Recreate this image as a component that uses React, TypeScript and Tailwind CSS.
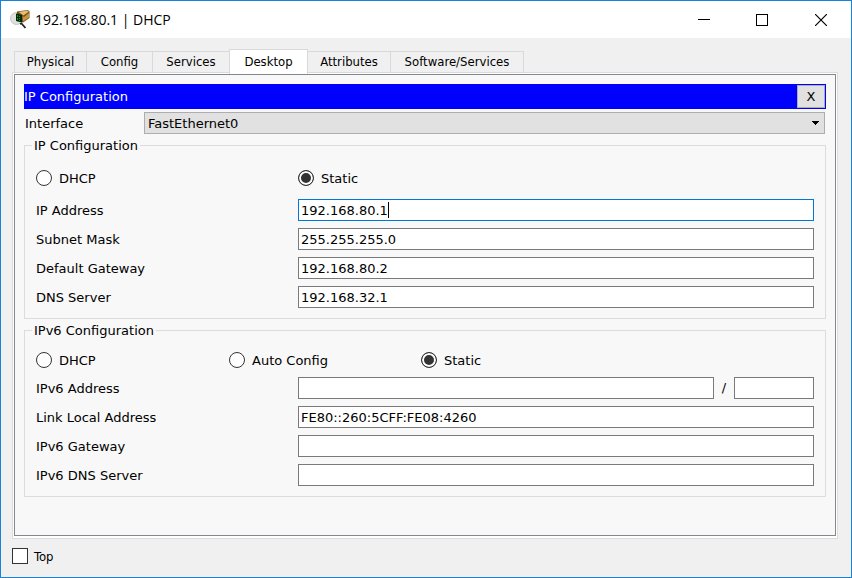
import { useState, type ReactNode } from "react";

const tabs = [
  { name: "Physical", width: "w-[73px]" },
  { name: "Config", width: "w-[67px]" },
  { name: "Services", width: "w-[78px]" },
  { name: "Desktop", width: "w-[79px]" },
  { name: "Attributes", width: "w-[84px]" },
  { name: "Software/Services", width: "w-[134px]" },
];

const fieldBox = "h-[22px] min-w-0 border bg-white px-[2px] leading-5 outline-none";

function DeviceIcon() {
  return (
    <svg width="20" height="20" viewBox="0 0 20 20" aria-hidden="true">
      <ellipse cx="6.500" cy="8.500" rx="6" ry="6" fill="#dfe1df" stroke="#c4c6c4" />
      <path d="M7 1.500 17.500 0 19.500 1v7L13 12.500 7 11z" fill="#6e4f1c" />
      <path d="M8.500 2 17 .5l2 1-5.500 4z" fill="#e6bc6c" />
      <path d="M12.500 6l1.500 1 5-4v4.500l-6 4z" fill="#c8963c" />
      <path d="M6 3.500 12 5v7.500L6 11z" fill="#06280a" />
      <path d="M7 5h1v2H7zM9 6h1v1H9zM7 8h1v2H7zM9 8h1v1H9zM9 10h1v1H9z" fill="#1f8a34" />
      <path d="M10 14l1.500-.5 4 4.500" fill="none" stroke="#222" strokeWidth="1.800" />
    </svg>
  );
}

function Radio({ name, label, checked, onSelect }: { name: string; label: string; checked: boolean; onSelect: () => void }) {
  return (
    <label className="flex h-4 items-center gap-[7px]">
      <input
        type="radio"
        name={name}
        checked={checked}
        onChange={onSelect}
        className="size-4 appearance-none rounded-full border border-[#333] bg-white shadow-[inset_0_0_0_2px_white] checked:bg-[#333]"
      />
      <span className="pt-px">{label}</span>
    </label>
  );
}

function Row({ id, label, children }: { id: string; label: string; children: ReactNode }) {
  return (
    <div className="flex h-[22px] items-center">
      <label htmlFor={id} className="w-[262px] shrink-0 pt-[2px]">{label}</label>
      <div className="relative flex min-w-0 flex-1 items-center">{children}</div>
    </div>
  );
}

function Group({ title, children }: { title: string; children: ReactNode }) {
  return (
    <fieldset className="min-w-0 border border-[#dcdcdc] px-[7px] pb-[10px]">
      <legend className="px-[2px] leading-[17px]">{title}</legend>
      <div className="px-1">{children}</div>
    </fieldset>
  );
}

export default function App() {
  const [mode, setMode] = useState("Static");
  const [mode6, setMode6] = useState("Static");
  return (
    <div className="flex min-h-screen flex-col border border-[#1883d7] bg-[#f0f0f0] font-['DejaVu_Sans',sans-serif] text-[13px] text-black">
      <header className="flex h-[37px] items-center bg-white pl-[9px]">
        <DeviceIcon />
        <h1 className="ml-[5px] flex-1 font-['Open_Sans','Noto_Sans',sans-serif] text-[14px]">192.168.80.1 | DHCP</h1>
        <button aria-label="Minimize" className="flex h-9 w-[58px] items-center justify-center">
          <svg width="12" height="12" shapeRendering="crispEdges"><path d="M0 5.500h12" stroke="#000" /></svg>
        </button>
        <button aria-label="Maximize" className="flex h-9 w-[58px] items-center justify-center">
          <svg width="12" height="12" shapeRendering="crispEdges"><path d="M.5.5h11v11H.5z" fill="none" stroke="#000" /></svg>
        </button>
        <button aria-label="Close" className="flex h-9 w-[60px] items-center justify-center">
          <svg width="12" height="12"><path d="M0 0l12 12M12 0L0 12" stroke="#000" strokeWidth="1.200" /></svg>
        </button>
      </header>

      <main className="flex flex-1 flex-col px-[11px] pt-[11px] pr-[13px] pb-[13px]">
        <nav className="z-10 -mb-px flex items-end pl-[2px] font-['DejaVu_Sans_Condensed','DejaVu_Sans',sans-serif]" role="tablist">
          {tabs.map((tab) => {
            const active = tab.name === "Desktop";
            return (
              <button
                key={tab.name}
                role="tab"
                aria-selected={active}
                className={`${tab.width} -mr-px border border-[#d9d9d9] leading-5 whitespace-nowrap ${
                  active ? "z-10 h-[25px] border-b-0 bg-white" : "mb-px h-[22px] bg-[#f0f0f0]"
                }`}
              >
                {tab.name}
              </button>
            );
          })}
        </nav>

        <div className="-mt-px flex flex-1 flex-col border border-[#dcdcdc] bg-white p-px pb-[2px]">
          <section className="flex flex-1 flex-col gap-[3px] border border-[#828790] bg-[#f8f8f8] p-[9px]">
            <div className="flex h-[25px] items-center justify-between bg-[#0000ff] text-white">
              <h2>IP Configuration</h2>
              <button className="mr-px h-[23px] w-7 border border-[#adadad] bg-[#e1e1e1] text-black">X</button>
            </div>

            <div className="flex items-center pr-px pl-px">
              <label htmlFor="interface" className="w-[119px] shrink-0 pt-[2px]">Interface</label>
              <div className="relative flex flex-1">
                <select id="interface" className="h-[22px] w-full appearance-none border border-[#adadad] bg-[#e1e1e1] pt-px pl-[3px] leading-5">
                  <option>FastEthernet0</option>
                </select>
                <svg className="pointer-events-none absolute top-[9px] right-[6px]" width="7" height="4" shapeRendering="crispEdges">
                  <path d="M0 0h7v1H6v1H5v1H4v1H3V3H2V2H1V1H0z" />
                </svg>
              </div>
            </div>

            <Group title="IP Configuration">
              <div className="mt-4 mb-[13px] flex">
                <div className="w-[262px]">
                  <Radio name="ipv4" label="DHCP" checked={mode === "DHCP"} onSelect={() => setMode("DHCP")} />
                </div>
                <Radio name="ipv4" label="Static" checked={mode === "Static"} onSelect={() => setMode("Static")} />
              </div>
              <div className="flex flex-col gap-[7px]">
                <Row id="ip" label="IP Address">
                  <input id="ip" defaultValue="192.168.80.1" className={`${fieldBox} flex-1 border-[#0078d7]`} />
                  <span className="absolute left-[90px] h-4 w-px bg-black" />
                </Row>
                <Row id="mask" label="Subnet Mask">
                  <input id="mask" defaultValue="255.255.255.0" className={`${fieldBox} flex-1 border-[#7a7a7a]`} />
                </Row>
                <Row id="gateway" label="Default Gateway">
                  <input id="gateway" defaultValue="192.168.80.2" className={`${fieldBox} flex-1 border-[#7a7a7a]`} />
                </Row>
                <Row id="dns" label="DNS Server">
                  <input id="dns" defaultValue="192.168.32.1" className={`${fieldBox} flex-1 border-[#7a7a7a]`} />
                </Row>
              </div>
            </Group>

            <Group title="IPv6 Configuration">
              <div className="mt-[13px] mb-[9px] flex">
                <div className="w-[193px]">
                  <Radio name="ipv6" label="DHCP" checked={mode6 === "DHCP"} onSelect={() => setMode6("DHCP")} />
                </div>
                <div className="w-[192px]">
                  <Radio name="ipv6" label="Auto Config" checked={mode6 === "Auto"} onSelect={() => setMode6("Auto")} />
                </div>
                <Radio name="ipv6" label="Static" checked={mode6 === "Static"} onSelect={() => setMode6("Static")} />
              </div>
              <div className="flex flex-col gap-[7px]">
                <Row id="ip6" label="IPv6 Address">
                  <input id="ip6" className={`${fieldBox} flex-1 border-[#7a7a7a]`} />
                  <span className="w-5 text-center">/</span>
                  <input aria-label="Prefix length" className={`${fieldBox} w-20 border-[#7a7a7a]`} />
                </Row>
                <Row id="link" label="Link Local Address">
                  <input id="link" defaultValue="FE80::260:5CFF:FE08:4260" className={`${fieldBox} flex-1 border-[#7a7a7a]`} />
                </Row>
                <Row id="gateway6" label="IPv6 Gateway">
                  <input id="gateway6" className={`${fieldBox} flex-1 border-[#7a7a7a]`} />
                </Row>
                <Row id="dns6" label="IPv6 DNS Server">
                  <input id="dns6" className={`${fieldBox} flex-1 border-[#7a7a7a]`} />
                </Row>
              </div>
            </Group>
          </section>
        </div>

        <label className="mt-[9px] flex h-4 items-center gap-[6px] self-start font-['DejaVu_Sans_Condensed','DejaVu_Sans',sans-serif]">
          <input type="checkbox" className="size-4 appearance-none border border-[#333] bg-white checked:bg-[#333]" />
          <span className="pt-px">Top</span>
        </label>
      </main>
    </div>
  );
}
